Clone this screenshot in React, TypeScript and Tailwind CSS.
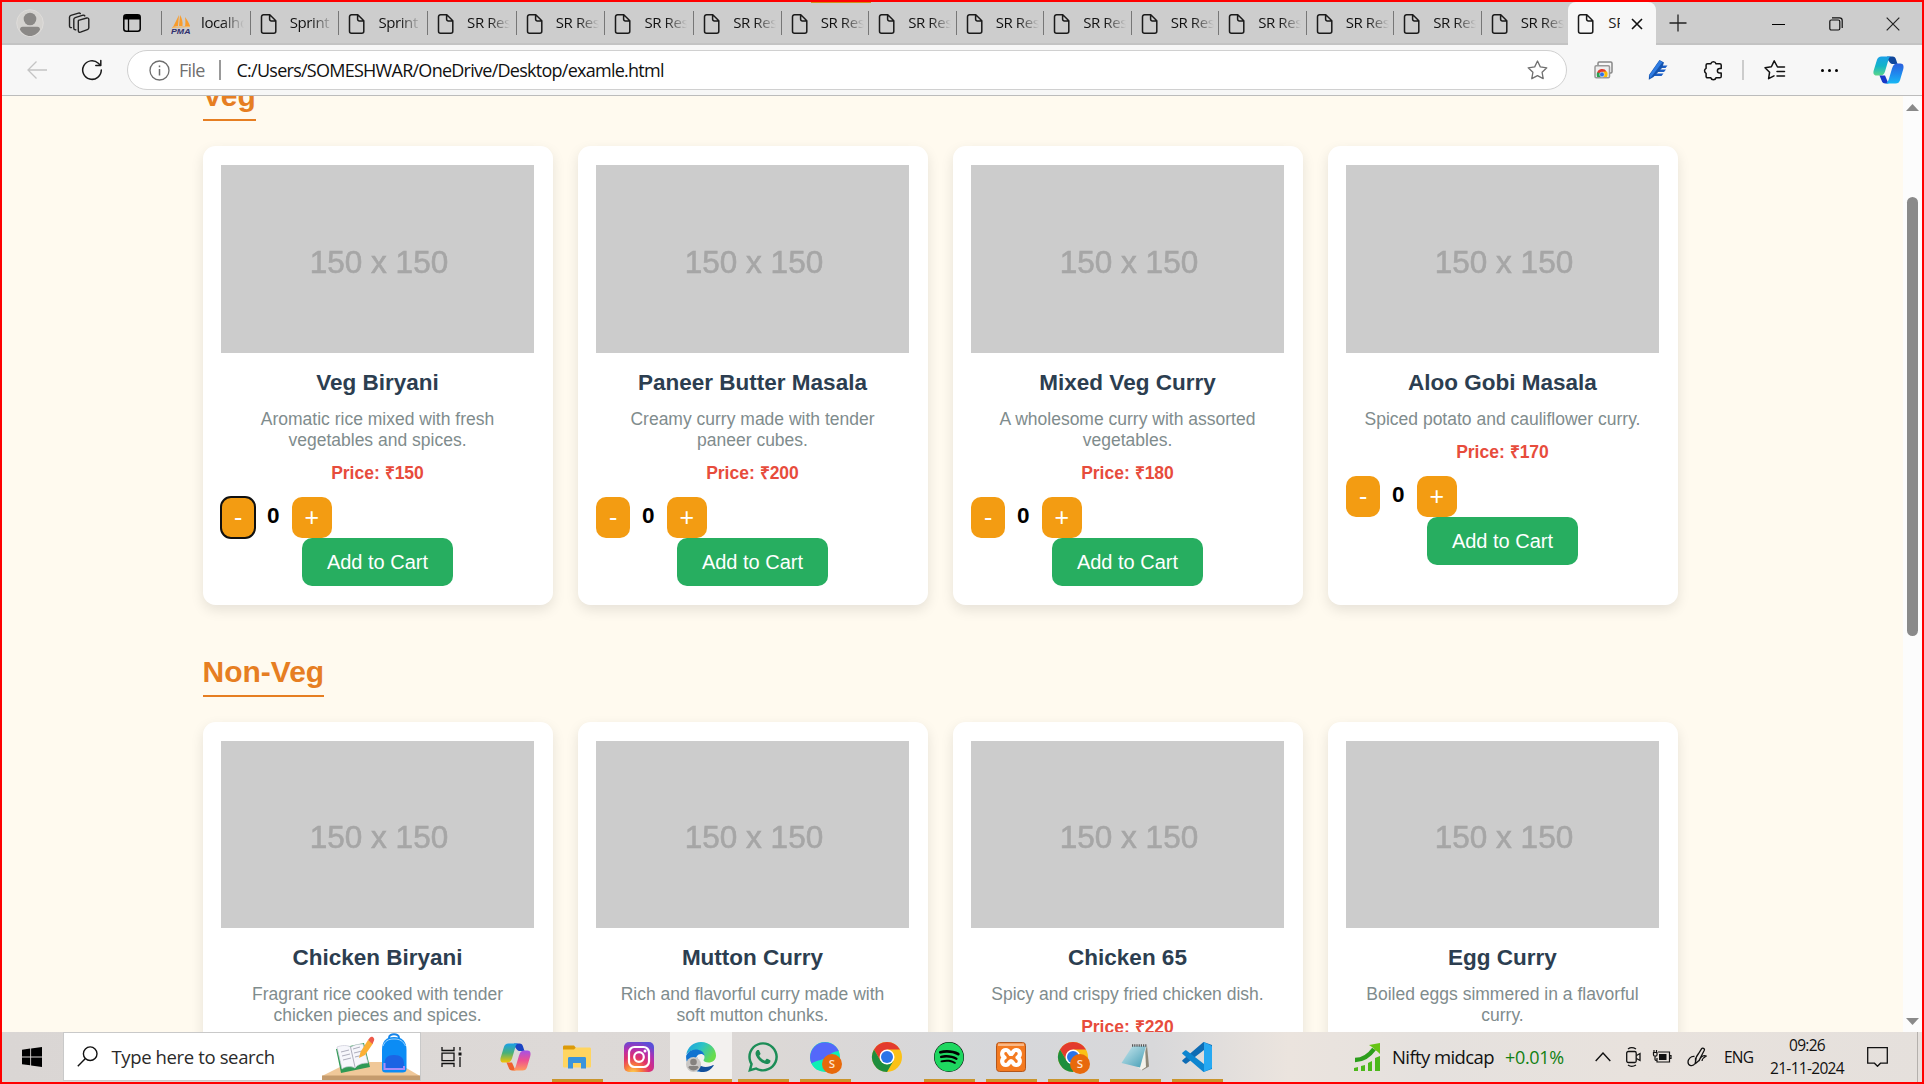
import React, { type ReactNode } from "react";
import { FaSpotify, FaWhatsapp } from "react-icons/fa";

type Dish = { name: string; lines: string[]; price: string; focused?: boolean };

const veg: Dish[] = [
  { name: "Veg Biryani", lines: ["Aromatic rice mixed with fresh", "vegetables and spices."], price: "₹150", focused: true },
  { name: "Paneer Butter Masala", lines: ["Creamy curry made with tender", "paneer cubes."], price: "₹200" },
  { name: "Mixed Veg Curry", lines: ["A wholesome curry with assorted", "vegetables."], price: "₹180" },
  { name: "Aloo Gobi Masala", lines: ["Spiced potato and cauliflower curry."], price: "₹170" },
];

const nonVeg: Dish[] = [
  { name: "Chicken Biryani", lines: ["Fragrant rice cooked with tender", "chicken pieces and spices."], price: "₹200" },
  { name: "Mutton Curry", lines: ["Rich and flavorful curry made with", "soft mutton chunks."], price: "₹250" },
  { name: "Chicken 65", lines: ["Spicy and crispy fried chicken dish."], price: "₹220" },
  { name: "Egg Curry", lines: ["Boiled eggs simmered in a flavorful", "curry."], price: "₹150" },
];

const tabs = ["localhost", "Sprint 1", "Sprint 2", ...Array.from({ length: 13 }, () => "SR Restaurant")];

function PageIcon() {
  return (
    <svg className="shrink-0" width="18" height="22" viewBox="0 0 18 22" fill="none" stroke="#1a1a1a" strokeWidth="1.5" strokeLinejoin="round">
      <path d="M3.5 1.8h6.3l6 6v10.4a2 2 0 0 1-2 2H3.500a2 2 0 0 1-2-2V3.800a2 2 0 0 1 2-2zM9.600 2v4.200a1.700 1.700 0 0 0 1.700 1.700h4.300" />
    </svg>
  );
}

function PmaIcon() {
  return (
    <svg className="shrink-0" width="20" height="20" viewBox="0 0 20 20">
      <path d="M8 1 2 13l5-1zM9 1c2 3 3 7 2.500 11L8 12zM14 3c3 4 4 6 5 9l-5 .500c.600-3 .500-6 0-9.500z" fill="#f89c2c" />
      <path d="M1 13.500 19 12.500" stroke="#f8b55c" strokeWidth="1" />
      <text x="0" y="19.500" fontSize="7.500" fontWeight="700" fontStyle="italic" textLength="19.500" lengthAdjust="spacingAndGlyphs" fill="#2f2f6e" fontFamily="Liberation Sans">PMA</text>
    </svg>
  );
}

function Tab({ label, wide, first }: { label: string; wide: boolean; first: boolean }) {
  return (
    <div className={`flex h-[42px] shrink-0 items-center ${wide ? "w-[88.7px]" : "w-[87.5px]"}`}>
      <div className="h-6 w-px shrink-0 bg-[#777]" />
      <div className="ml-[9px] flex w-[19px] shrink-0 pt-[3px]">{first ? <PmaIcon /> : <PageIcon />}</div>
      <div className="ml-[11px] w-[43px] overflow-hidden bg-gradient-to-r from-[#111] from-50% to-transparent bg-clip-text pb-[2px] text-[15px] leading-5 tracking-[-0.4px] whitespace-nowrap text-transparent">
        {label}
      </div>
    </div>
  );
}

function Cell({ className, children }: { className: string; children: ReactNode }) {
  return <div className={`flex shrink-0 items-center justify-center ${className}`}>{children}</div>;
}

function TabStrip() {
  return (
    <div className="relative flex h-[43px] shrink-0 items-center border-b-2 border-[#c3c3c3] bg-[#cdcdcd]">
      <div className="absolute top-0 left-[809px] h-px w-[60px] bg-[#d09018]" />
      <Cell className="w-14">
        <svg width="28" height="28" viewBox="0 0 28 28">
          <circle cx="14" cy="14" r="13.300" fill="#d5d3d0" stroke="#dedcda" />
          <circle cx="14" cy="10" r="6.300" fill="#8a8886" />
          <path d="M4 20.500c0-1.500 1-2.700 2.600-2.700h14.800c1.600 0 2.600 1.200 2.600 2.700-2 4-6 6.500-10 6.500s-8-2.500-10-6.500z" fill="#8a8886" />
        </svg>
      </Cell>
      <Cell className="w-[42px]">
        <svg width="22" height="22" viewBox="0 0 22 22" fill="none" stroke="#222" strokeWidth="1.400" strokeLinejoin="round" strokeLinecap="round">
          <path d="m10.500 8.300 8.200-2.300c1.200-.300 2.100.300 2.100 1.600v8.200c0 1-.500 1.600-1.400 1.900l-6.900 2.500c-1.300.400-2.200-.200-2.200-1.600V9.600c0-.700.100-1.200.200-1.300zM7.800 17.800c-1.100.200-2-.400-2-1.700V7.500c0-1 .500-1.600 1.400-1.900L15 3.200c.800-.200 1.500 0 1.800.700M3.500 15.600c-1.300.200-2-.500-2-1.800V5.200c0-1 .500-1.600 1.400-1.900l7.600-2.200c.700-.200 1.300-.100 1.800.400" />
        </svg>
      </Cell>
      <Cell className="w-[61px] pl-[2px]">
        <svg width="18" height="18" viewBox="0 0 18 18" fill="none">
          <rect x=".8" y=".8" width="16.400" height="16.400" rx="2.500" stroke="#000" strokeWidth="1.500" />
          <path d="M1 3a2 2 0 0 1 2-2h12a2 2 0 0 1 2 2v2.500H1z" fill="#000" />
          <path d="M5.500 5v12" stroke="#000" strokeWidth="1.300" />
        </svg>
      </Cell>
      {tabs.map((t, i) => (
        <Tab key={i} label={t} wide={i < 6} first={i === 0} />
      ))}
      <div className="relative mt-px flex h-[43px] w-[88px] shrink-0 items-center rounded-t-lg bg-[#f7f7f7]">
        <div className="ml-[9px] flex pt-[2px]"><PageIcon /></div>
        <div className="ml-[13px] w-3 overflow-hidden pb-[3px] text-[15px] leading-5 whitespace-nowrap text-[#222]">SR</div>
        <svg className="ml-[11px] mt-[2px]" width="12" height="12" viewBox="0 0 12 12" stroke="#111" strokeWidth="1.600"><path d="m1 1 10 10M11 1 1 11" /></svg>
      </div>
      <Cell className="w-11">
        <svg width="18" height="18" viewBox="0 0 18 18" stroke="#222" strokeWidth="1.300"><path d="M9 .5v17M.5 9h17" /></svg>
      </Cell>
      <div className="grow" />
      <Cell className="w-[58px] pl-[2px]"><div className="mt-[3px] h-px w-[13px] bg-black" /></Cell>
      <Cell className="w-[58px] pl-px">
        <svg className="mt-[2px]" width="14" height="14" viewBox="0 0 14 14" fill="none" stroke="#111" strokeWidth="1.200">
          <rect x=".8" y="3" width="10" height="10" rx="1.500" />
          <path d="M3 .8h7.500a2.700 2.700 0 0 1 2.700 2.700V11" />
        </svg>
      </Cell>
      <Cell className="w-[58px]">
        <svg className="mt-[2px]" width="14" height="14" viewBox="0 0 14 14" stroke="#222" strokeWidth="1.200"><path d="m.7.7 12.600 12.600M13.300.7.7 13.300" /></svg>
      </Cell>
    </div>
  );
}

function CopilotMark({ id, warm }: { id: string; warm?: boolean }) {
  return (
    <svg width="31" height="28" viewBox="0 0 31 28">
      <defs>
        <linearGradient id={`${id}a`} x1="0" y1="0" x2="0" y2="1">
          <stop offset="0" stopColor="#1aa0e8" />
          <stop offset=".5" stopColor={warm ? "#4ab078" : "#12b4c8"} />
          <stop offset="1" stopColor={warm ? "#f5c400" : "#5cd68a"} />
        </linearGradient>
        <linearGradient id={`${id}b`} x1="0" y1="0" x2="0" y2="1">
          <stop offset="0" stopColor={warm ? "#a452e8" : "#2c5fdc"} />
          <stop offset=".5" stopColor={warm ? "#ee5090" : "#2088ee"} />
          <stop offset="1" stopColor={warm ? "#ff9a5c" : "#18b8f4"} />
        </linearGradient>
      </defs>
      <path d="M14 .5h5.500c2 0 3 1 3.500 3L24.500 8h-5c-2 0-3-2-4.500-4z" fill={warm ? "#1b44c4" : "#10479c"} />
      <path d="M8.500.5H18c-2.200.8-2.500 3-3.200 5.500L12 15.500C11.200 18 9.800 19.500 7.500 19.500H3.500C.5 19.500 0 17 .7 14.500L4 3.800C4.600 1.800 6 .5 8.500.5z" fill={`url(#${id}a)`} />
      <path d="M6.500 19.500H12l3.500 8H12.500c-2.300 0-3.300-1.200-4-3.300z" fill={warm ? "#f0602c" : "#1838c8"} />
      <path d="M22.500 27.500H12.500c2.200-.8 3-3 3.700-5.500l2.800-9.500C19.800 10 21.200 7.500 23.500 7.500h4c3 0 3.500 3 2.800 5.500L27 24.200c-.6 2-2 3.300-4.500 3.300z" fill={`url(#${id}b)`} />
    </svg>
  );
}

function Toolbar() {
  return (
    <div className="flex h-[51px] shrink-0 items-center border-b border-[#bcbcbc] bg-[#f7f7f7]">
      <Cell className="w-[70px]">
        <svg width="20" height="18" viewBox="0 0 20 18" fill="none" stroke="#c4c4c4" strokeWidth="1.300"><path d="M20 9H1M9.500.5 1 9l8.500 8.500" /></svg>
      </Cell>
      <Cell className="w-10">
        <svg width="22" height="22" viewBox="0 0 22 22" fill="none" stroke="#1a1a1a" strokeWidth="1.500" strokeLinecap="round" strokeLinejoin="round">
          <path d="M20.300 11a9.300 9.300 0 1 1-3-6.800L19.500 6.300M19.800 1.500v5h-5" />
        </svg>
      </Cell>
      <div className="ml-[15px] flex h-10 w-[1440px] shrink-0 items-center rounded-full border border-[#d0d0d0] bg-white">
        <svg className="ml-[21px] shrink-0" width="21" height="21" viewBox="0 0 21 21" fill="none" stroke="#6e6e6e" strokeWidth="1.300">
          <circle cx="10.500" cy="10.500" r="9.500" />
          <path d="M10.500 9v6.500M10.500 5.500v1.700" strokeWidth="1.500" />
        </svg>
        <div className="ml-[9px] w-[40px] pb-px text-[18px] leading-6 tracking-[-0.7px] text-[#707070]">File</div>
        <div className="h-5 w-[1.5px] bg-[#999]" />
        <div className="ml-[16px] grow pb-px text-[18px] leading-6 tracking-[-0.74px] whitespace-nowrap text-[#111]">C:/Users/SOMESHWAR/OneDrive/Desktop/examle.html</div>
        <svg className="mr-[18px]" width="21" height="20" viewBox="0 0 21 20" fill="none" stroke="#707070" strokeWidth="1.300" strokeLinejoin="round">
          <path d="m10.500 1 2.800 5.900 6.500.9-4.700 4.500 1.100 6.400-5.700-3-5.700 3 1.100-6.400L1.200 7.800l6.500-.9z" />
        </svg>
      </div>
      <Cell className="ml-[9px] w-[54px]">
        <svg width="19" height="18" viewBox="0 0 19 18">
          <path d="M4 4V2.200C4 1.500 4.500 1 5.200 1h11.600c.7 0 1.200.5 1.200 1.200v8.600c0 .7-.5 1.200-1.200 1.200H16" fill="none" stroke="#888" strokeWidth="1.500" />
          <rect x="1" y="4.700" width="14.500" height="12" rx="1.200" fill="#eee" stroke="#999" strokeWidth="1.500" />
          <path d="M3 12a5.300 5.300 0 0 1 9.600-1.500L8 12.500z" fill="#e33b2e" />
          <path d="M3 11.500c-.4 1.600-.3 3 .2 4.500H7l-.5-4z" fill="#27a050" />
          <path d="M9 10.500h4c.8 1.700.8 3.700 0 5.500H9z" fill="#fbbc05" />
          <circle cx="8" cy="13.500" r="2.400" fill="#2d6fe8" stroke="#fff" strokeWidth=".5" />
        </svg>
      </Cell>
      <Cell className="w-[54px] pl-px">
        <svg width="20" height="20" viewBox="0 0 20 20">
          <path d="M12 5.500h7.500L17.500 8H10zM10 9.500h8L16 12H8zM7.500 13.500h8l-2 2.500H5.500z" fill="#1d5fc4" />
          <path d="M11.500 0 16 2.500 14 8 5.500 17 .8 19.700 1 15z" fill="#1453ae" />
          <path d="m11.500.500 3 1.700L2.500 18l-1.300-2.500z" fill="#2f7ce2" />
        </svg>
      </Cell>
      <Cell className="w-[58px] pl-px">
        <svg width="21" height="21" viewBox="0 0 21 21" fill="none" stroke="#111" strokeWidth="1.500" strokeLinejoin="round">
          <path d="M4.500 3.700h3.300a2.700 2.700 0 0 1 5.200 0h3.800c.8 0 1.400.6 1.400 1.400v3.400h-1.500a2.300 2.300 0 0 0 0 4.600h1.500v3.300c0 .8-.6 1.400-1.400 1.400H13a2.700 2.700 0 0 1-5.200 0H4.500c-.8 0-1.400-.6-1.400-1.400v-3.100a2.800 2.800 0 0 1 0-5V5.100c0-.8.600-1.400 1.400-1.400z" />
        </svg>
      </Cell>
      <div className="h-5 w-[1.5px] bg-[#ccc]" />
      <Cell className="ml-px w-[58px] pl-[2px]">
        <svg width="22" height="20" viewBox="0 0 22 20" fill="none" stroke="#111" strokeWidth="1.500" strokeLinejoin="round" strokeLinecap="round">
          <path d="M20.500 7h-7L10.200.9 7.400 6.800 1 7.700l4.600 4.500-1 6.500 5.400-2.900M13 11.500h7.500M13 16h7.500" />
        </svg>
      </Cell>
      <Cell className="w-[52px] gap-1 pl-px">
        <i className="size-[3px] rounded-full bg-black" />
        <i className="size-[3px] rounded-full bg-black" />
        <i className="size-[3px] rounded-full bg-black" />
      </Cell>
      <Cell className="w-[62px] pl-[5px]"><CopilotMark id="tb" /></Cell>
    </div>
  );
}

function Card({ dish }: { dish: Dish }) {
  return (
    <div className="flex flex-col items-center rounded-[12.5px] bg-white px-[18.75px] pt-[19px] pb-[19px] shadow-[0_5px_12.5px_rgba(0,0,0,0.1)]">
      <div className="flex h-[187.5px] w-full items-center justify-center bg-[#cccccc] pt-[7px] pl-[3px] text-[31.5px] leading-none text-[#a6a6a6]">
        <span className="font-['Liberation_Sans',sans-serif] [-webkit-text-stroke:0.6px_#a6a6a6] [filter:blur(0.4px)]">150 x 150</span>
      </div>
      <h3 className="mt-[17px] text-[22.5px] leading-[26px] font-bold text-[#2c3e50]">{dish.name}</h3>
      <p className="mt-[13px] text-center text-[17.5px] leading-[21px] text-[#7f8c8d]">
        {dish.lines.map((l) => (
          <span key={l} className="block whitespace-nowrap">{l}</span>
        ))}
      </p>
      <p className="mt-3 text-[17.5px] leading-5 font-bold text-[#e74c3c]">Price: {dish.price}</p>
      <div className="mt-[14px] flex h-[41px] items-center self-start">
        <button className={`h-[41px] w-[34px] rounded-[10px] bg-[#f39c12] text-[25px] leading-none text-white ${dish.focused ? "outline-2 outline-offset-[-1px] outline-[#101010]" : ""}`}>-</button>
        <span className="w-[37px] pr-px pb-[2px] text-center text-[22.5px] leading-none font-bold text-black">0</span>
        <button className="h-[41px] w-10 rounded-[10px] bg-[#f39c12] pr-px text-[25px] leading-none text-white">+</button>
      </div>
      <button className="h-12 w-[151px] rounded-[10px] bg-[#27ae60] text-[20px] leading-none text-white">Add to Cart</button>
    </div>
  );
}

function Section({ title, dishes }: { title: string; dishes: Dish[] }) {
  return (
    <section className="mb-[50px]">
      <h2 className="w-fit border-b-2 border-[#e67e22] pb-[6px] text-[30px] leading-[34px] font-bold text-[#e67e22]">{title}</h2>
      <div className="mt-[25px] grid grid-cols-4 gap-[25px]">
        {dishes.map((d) => (
          <Card key={d.name} dish={d} />
        ))}
      </div>
    </section>
  );
}

function Chrome({ badge }: { badge?: boolean }) {
  return (
    <svg className="overflow-visible" width="30" height="30" viewBox="0 0 30 30">
      <circle cx="15" cy="15" r="15" fill="#fbc116" />
      <path d="M2 7.500A15 15 0 0 1 28 7.500H15L8.500 18.700z" fill="#e33b2e" />
      <path d="M2 7.500a15 15 0 0 0 13 22.500l6.500-11.200L15 22.500l-6.500-3.700z" fill="#1e8e3e" />
      <circle cx="15" cy="15" r="7.500" fill="#fff" />
      <circle cx="15" cy="15" r="6" fill="#2a74e8" />
      {badge && <Badge />}
    </svg>
  );
}

function Badge() {
  return (
    <g>
      <circle cx="22" cy="22" r="10" fill="#e8690b" />
      <text x="22" y="26" textAnchor="middle" fontSize="11.500" fontFamily="Open Sans" fontWeight="600" fill="#fde3cf">S</text>
    </g>
  );
}

function Explorer() {
  return (
    <svg width="28" height="24" viewBox="0 0 28 24">
      <path d="M0 2C0 1 .5.500 1.500.500H11l2 2.500v3H0z" fill="#dc9a08" />
      <path d="M0 4.500h11l2-2h13.500c1 0 1.500.5 1.500 1.500v17c0 1-.5 1.500-1.500 1.500h-25C.5 22.500 0 22 0 21z" fill="#ffd560" />
      <path d="M5 23.500v-10c0-1 .5-1.500 1.500-1.500h15c1 0 1.500.5 1.500 1.500v10h-5V18h-8v5.500z" fill="#3a94dc" />
    </svg>
  );
}

function Instagram() {
  return (
    <svg width="30" height="30" viewBox="0 0 30 30">
      <defs>
        <radialGradient id="ig" cx=".3" cy="1.050" r="1.100">
          <stop offset="0" stopColor="#fdd853" />
          <stop offset=".25" stopColor="#f9803a" />
          <stop offset=".5" stopColor="#e0306c" />
          <stop offset=".75" stopColor="#b32fb0" />
          <stop offset="1" stopColor="#5a4fd8" />
        </radialGradient>
      </defs>
      <rect width="30" height="30" rx="5" fill="url(#ig)" />
      <g fill="none" stroke="#fff" strokeWidth="2.200">
        <rect x="5" y="5" width="20" height="20" rx="5.500" />
        <circle cx="15" cy="15" r="4.800" />
      </g>
      <circle cx="21" cy="9" r="1.500" fill="#fff" />
    </svg>
  );
}

function Edge() {
  return (
    <svg width="30" height="30" viewBox="0 0 30 30">
      <defs>
        <linearGradient id="edg" x1="0" y1="0" x2="1" y2=".5">
          <stop offset="0" stopColor="#1b9de2" />
          <stop offset=".5" stopColor="#2cc3c6" />
          <stop offset="1" stopColor="#68dc4c" />
        </linearGradient>
      </defs>
      <path d="M.3 12.500C1.500 5 7.500 0 15 0c9 0 15 6.500 15 13.500 0 4.500-3.500 7-7.500 7-3 0-5-1-5-2.200 0-.7 1-1.300 1-3.300 0-4-4-7-9-7C5.500 8 2 10 .3 12.500z" fill="url(#edg)" />
      <path d="M.2 13.500C2 9.500 5.500 7.500 9.500 7.500c5 0 8.800 2.700 9 6.500-1-1.500-2.300-2-3.500-2-3.500 0-5.500 3.500-5.500 7 0 5 3.500 9 8 10.500C8 31.500-1 24 .2 13.500z" fill="#1073d0" />
      <path d="M11.500 15c-1.500 5 1.500 10 8 10 3.500 0 6-1.200 7.500-2 .5-.2.900.2.600.7C24.500 28.500 20 30.500 15 30c-5.500-2-8-9-3.500-15z" fill="#124f9c" />
      <circle cx="7.500" cy="22.500" r="7.500" fill="#c9c7c5" />
      <circle cx="7.500" cy="20" r="3.300" fill="#85827f" />
      <path d="M2.500 25.500c0-1 .7-1.500 1.500-1.500h7c.8 0 1.500.5 1.500 1.500-1 2-3 3-5 3s-4-1-5-3z" fill="#85827f" />
    </svg>
  );
}

function BlueGreenDisc() {
  return (
    <svg className="overflow-visible" width="30" height="30" viewBox="0 0 30 30">
      <circle cx="15" cy="15" r="15" fill="#10efb4" />
      <path d="M1.500 21.500A15 15 0 1 1 28.800 9C24 9.500 21.500 11 18.500 14 14 18.500 8 17.500 1.500 21.500z" fill="#5468fa" />
      <path d="M1.500 21.500c3-1.800 6-2.300 8.500-2.500 1.500 3.500.5 7-2.500 9-2.500-1.500-4.500-3.500-6-6.500z" fill="#10efb4" />
      <Badge />
    </svg>
  );
}

function Xampp() {
  return (
    <svg width="30" height="30" viewBox="0 0 30 30">
      <rect x=".5" y=".5" width="29" height="29" rx="3" fill="#f47a20" stroke="#b4561a" />
      <path d="M2 1.500h26v2.500H2z" fill="#f8b888" />
      <g fill="none" stroke="#fff" strokeWidth="4.200" strokeLinejoin="round" strokeLinecap="round">
        <path d="M8.500 15.500C5 13.500 5.500 8 10 8c3.500 0 3 4 5 4s1.500-4 5-4c4.500 0 5 5.500 1.500 7.500C25 17.500 24.500 23 20 23c-3.500 0-3-4-5-4s-1.500 4-5 4c-4.500 0-5-5.500-1.500-7.500z" />
      </g>
    </svg>
  );
}

function Notepad() {
  return (
    <svg width="28" height="28" viewBox="0 0 28 28">
      <defs>
        <linearGradient id="np" x1="0" y1="0" x2="1" y2="1">
          <stop offset="0" stopColor="#cdeaf0" />
          <stop offset="1" stopColor="#429cb4" />
        </linearGradient>
      </defs>
      <path d="m26 2.500 2 21-7 4 1-12z" fill="#8e8878" />
      <path d="m24 3 1 21-4.500 3-4-3z" fill="#f4f2ea" />
      <path d="M11.500 3H25l-6 21.500L.5 20z" fill="url(#np)" />
      <path d="M11 2.500h15" stroke="#555" strokeWidth="2.500" strokeDasharray="1.200 1" />
    </svg>
  );
}

function VsCode() {
  return (
    <svg width="30" height="30" viewBox="0 0 30 30">
      <path d="M21.500 0 30 3v6l-8-1L4.500 21.500c-.5.400-1 .4-1.500 0L.6 19.600c-.6-.5-.6-1.200 0-1.700z" fill="#0f6cb4" />
      <path d="M21.500 30 30 27v-6l-8 1L4.500 8.500c-.5-.400-1-.4-1.500 0L.6 10.400c-.6.500-.6 1.200 0 1.700z" fill="#0e86d0" />
      <path d="M21.500 0 28.700 3.300c.8.400 1.300 1 1.300 2v19.400c0 1-.5 1.600-1.300 2L21.500 30c.4-.3.5-.9.500-1.600V1.600c0-.7-.1-1.300-.5-1.600z" fill="#27a9f2" />
    </svg>
  );
}

function TaskView() {
  return (
    <svg className="mr-1" width="21" height="20" viewBox="0 0 21 20" fill="none" stroke="#111" strokeWidth="1.300">
      <path d="M1 0v3.500h12V0M1 20v-3.500h12V20M1 6.200h12v7.500H1zM19 0v3.500M19 10v10" />
      <path d="M17.500 5.500h3v3h-3z" fill="#111" stroke="none" />
    </svg>
  );
}

const apps: { icon: ReactNode; open?: boolean; active?: boolean }[] = [
  { icon: <TaskView /> },
  { icon: <CopilotMark id="tk" warm /> },
  { icon: <Explorer />, open: true },
  { icon: <Instagram /> },
  { icon: <Edge />, open: true, active: true },
  { icon: <FaWhatsapp size={34} color="#1c8d57" />, open: true },
  { icon: <BlueGreenDisc />, open: true },
  { icon: <Chrome /> },
  { icon: <div className="flex rounded-full bg-black"><FaSpotify size={30} color="#1ed760" /></div>, open: true },
  { icon: <Xampp />, open: true },
  { icon: <Chrome badge />, open: true },
  { icon: <Notepad />, open: true },
  { icon: <VsCode />, open: true },
];

function DeskArt() {
  return (
    <svg className="shrink-0" width="98" height="48" viewBox="0 0 98 48">
      <path d="M0 44 28 30h46l24 14z" fill="#f0c899" />
      <path d="M0 43.500h98V48H0z" fill="#c59b6d" />
      <path d="m14 17 5 24 29-6-6-24z" fill="#2f9a54" />
      <path d="m15 15 5 22c4-3 9-3 13-1 3-4 8-5 13-5l-5-19c-5 0-9 1-12 3-4-2-9-2-14 0z" fill="#f6f6fb" stroke="#ccccd8" strokeWidth=".7" />
      <path d="m28.500 15 4.500 20M19 20l8-2M20 24l8-2M21 28l8-2M31 17l7-2M32 21l8-2M33 25l8-2" stroke="#9a9aab" strokeWidth=".8" />
      <path d="m37 26 1.500-6L46 8l5 3.500L43 23z" fill="#fbb034" />
      <path d="m46 8 2-2.500c2-2 5 .5 4 3L50.500 12z" fill="#ee5a4a" />
      <path d="M67 6c0-5 10-5 10 0" fill="none" stroke="#1684e8" strokeWidth="2" />
      <path d="M60 18C60 9 64 5 72 5s12.500 4 12.500 13v19c0 2.500-1.500 3.500-4 3.500h-17c-2.500 0-3.500-1-3.500-3.500z" fill="#0b8cf5" />
      <path d="M61 14c2-5 5-7 11-7s9 2 11.500 7" fill="none" stroke="#9cd4ff" strokeWidth="1" />
      <path d="M62.500 32c0-6 3-9 9.500-9s10 3 10 9v5H62.500z" fill="#1c64e4" />
      <path d="M62.500 31v6H82v-3" fill="none" stroke="#a98cf8" strokeWidth="2" />
    </svg>
  );
}

function Taskbar() {
  return (
    <div className="flex h-[50px] shrink-0 items-center bg-[linear-gradient(90deg,#dad6d4_0%,#ddd9d7_30%,#dcd8d6_40%,#d6d7da_52%,#d8d8da_60%,#ebe4de_67%,#e5e1de_74%,#e8e2dd_85%,#e5e0dc_100%)]">
      <Cell className="w-[60.5px] pr-[1px]">
        <svg width="20" height="20" viewBox="0 0 20 20"><path d="M0 2.800 8.200 1.600v7.900H0zM9.100 1.500 20 0v9.500H9.100zM0 10.400h8.200v7.900L0 17.200zM9.100 10.400H20V20L9.100 18.500z" /></svg>
      </Cell>
      <div className="flex h-[49px] w-[358.5px] shrink-0 items-center self-start border border-[#c9c9c9] bg-white">
        <svg className="ml-[13px] shrink-0" width="21" height="21" viewBox="0 0 21 21" fill="none" stroke="#111" strokeWidth="1.400">
          <circle cx="13.200" cy="7.700" r="6.800" />
          <path d="M8.400 12.600.8 20.300" />
        </svg>
        <div className="ml-[14px] grow text-[18.5px] leading-6 tracking-[-0.37px] whitespace-nowrap text-[#2a2a2a]">Type here to search</div>
        <div className="flex self-end"><DeskArt /></div>
      </div>
      <div className="flex h-full shrink-0 pl-px">
        {apps.map((a, i) => (
          <div key={i} className={`relative flex h-full w-[62px] items-center justify-center ${a.active ? "bg-[#f3f1ef]" : ""}`}>
            {a.icon}
            {a.open && <div className={`absolute bottom-0 h-[3px] bg-[#c9952c] ${a.active ? "w-full" : "w-[51px]"}`} />}
          </div>
        ))}
      </div>
      <svg className="ml-[125px] shrink-0" width="28" height="28" viewBox="0 0 28 28">
        <path d="M2 17C10 17 16 13 21 6" fill="none" stroke="#2c9e1c" strokeWidth="4.500" />
        <path d="M16 2 27 0v11l-3-3-5-4z" fill="#66c414" />
        <path d="M21 6 27 1v9" fill="#66c414" />
        <path d="M1 28v-3l4-1v4zM8 28v-5l4-1v6zM15 28v-8l4-2v10zM22 28V15l5-2v15z" fill="#4cb81c" />
      </svg>
      <div className="ml-[11px] w-[113px] shrink-0 text-[18.500px] leading-6 tracking-[-0.6px] whitespace-nowrap text-[#111]">Nifty midcap</div>
      <div className="w-[90px] shrink-0 text-[18px] leading-6 tracking-[-0.35px] text-[#128012]">+0.01%</div>
      <svg className="shrink-0" width="16" height="10" viewBox="0 0 16 10" fill="none" stroke="#111" strokeWidth="1.400"><path d="m.7 9 7.300-8 7.300 8" /></svg>
      <svg className="ml-[15px] shrink-0" width="15" height="20" viewBox="0 0 15 20" fill="none" stroke="#111" strokeWidth="1.300">
        <rect x=".7" y="4.500" width="9.500" height="11" rx="1.500" />
        <path d="m10.500 8.500 3.500-2v7l-3.500-2M2 2c2-1.500 5.500-1.500 8 0M2 18c2 1.500 5.500 1.500 8 0" />
      </svg>
      <svg className="ml-[11px] shrink-0" width="20" height="16" viewBox="0 0 20 16" fill="none" stroke="#111" strokeWidth="1.200">
        <path d="M6 3h11.500v10H5V9M17.500 6.500H19v3h-1.500M3 7v3.500c0 1 1 1 2 1M1.500 3.500h3.500V6c0 1.500-3.500 1.500-3.500 0zM2 1v2.500M4.500 1v2.500" />
        <path d="M7 5h7.500v6H7z" fill="#111" stroke="none" />
      </svg>
      <svg className="ml-[15px] shrink-0" width="20" height="20" viewBox="0 0 20 20" fill="none" stroke="#111" strokeWidth="1.300" strokeLinejoin="round">
        <path d="M8.500 11.500 14.500 1.800c1-1.400 3.500-.2 2.800 1.500L12 13.500l-3.500 3zM7.500 9.500c-4-.5-6.500 3-6.500 5.500 0 4 5 5 7 1.500C9.500 13.500 8 10 11.500 6.500M12 14c1.500-4 4.500-6 7.300-5-1 .5-3.800 2-4.300 5" />
      </svg>
      <div className="ml-[17px] w-[43px] shrink-0 text-[15.5px] leading-5 tracking-[-0.8px] text-[#111]">ENG</div>
      <div className="w-[80px] shrink-0 text-center text-[15.5px] leading-[23px] tracking-[-0.7px] whitespace-nowrap text-[#111]">
        <div>09:26</div>
        <div>21-11-2024</div>
      </div>
      <svg className="ml-[20px] shrink-0" width="21" height="20" viewBox="0 0 21 20" fill="none" stroke="#111" strokeWidth="1.300"><path d="M.7.700h19.600v15.500H13.500L10.500 19.300 7.500 16.200H.7z" /></svg>
      <div className="grow" />
      <div className="mr-1 h-full w-px bg-[#b4b0ac]" />
    </div>
  );
}

function Scrollbar() {
  return (
    <div className="flex w-[19px] shrink-0 flex-col items-center bg-[#fcfcfc]">
      <svg className="mt-2" width="13" height="7" viewBox="0 0 13 7" fill="#8a8a8a"><path d="M0 7 6.500 0 13 7z" /></svg>
      <div className="mt-[86px] h-[439px] w-[11px] rounded-full bg-[#8a8a8a]" />
      <div className="grow" />
      <svg className="mb-[7px]" width="13" height="7" viewBox="0 0 13 7" fill="#8a8a8a"><path d="M0 0h13L6.500 7z" /></svg>
    </div>
  );
}

export default function App() {
  return (
    <div className="flex h-[1084px] w-[1924px] flex-col overflow-hidden border-2 border-[#ff0000] font-['Open_Sans','Noto_Sans',sans-serif]">
      <TabStrip />
      <Toolbar />
      <div className="flex min-h-0 grow">
        <main className="h-full grow overflow-hidden bg-[#fffaef] font-['Liberation_Sans',Arial,sans-serif]">
          <div className="-mt-[17px] ml-[200.5px] w-[1475px]">
            <Section title="Veg" dishes={veg} />
            <Section title="Non-Veg" dishes={nonVeg} />
          </div>
        </main>
        <Scrollbar />
      </div>
      <Taskbar />
    </div>
  );
}
